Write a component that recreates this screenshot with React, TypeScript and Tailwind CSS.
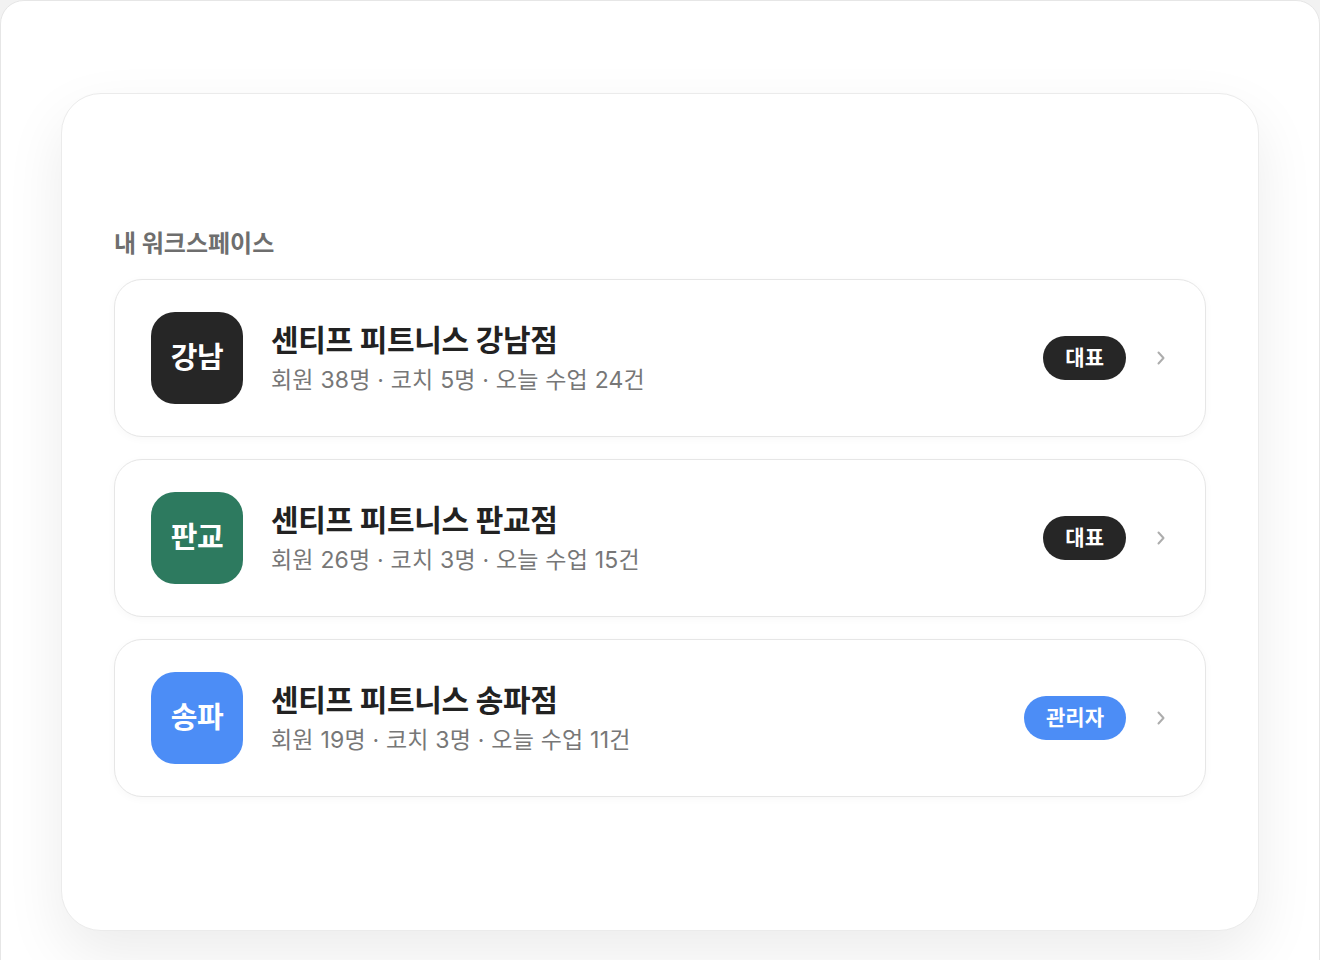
import React from "react";

type Ws = {
  short: string;
  name: string;
  members: number;
  coaches: number;
  classes: number;
  avatar: string;
  role: string;
  badge: string;
};

const items: Ws[] = [
  { short: "강남", name: "센티프 피트니스 강남점", members: 38, coaches: 5, classes: 24, avatar: "bg-[#262626]", role: "대표", badge: "bg-[#262626]" },
  { short: "판교", name: "센티프 피트니스 판교점", members: 26, coaches: 3, classes: 15, avatar: "bg-[#2d7a5f]", role: "대표", badge: "bg-[#262626]" },
  { short: "송파", name: "센티프 피트니스 송파점", members: 19, coaches: 3, classes: 11, avatar: "bg-[#4c8df6]", role: "관리자", badge: "bg-[#4c8df6]" },
];

function Chevron() {
  return (
    <svg width="10" height="16" viewBox="0 0 10 16" fill="none">
      <path d="M2.5 2.5L7.5 8L2.5 13.5" stroke="#adadad" strokeWidth="2" strokeLinecap="round" strokeLinejoin="round" />
    </svg>
  );
}

export default function App() {
  return (
    <div
      className="w-[1320px] h-[960px] overflow-hidden bg-[#f2f2f2]"
      style={{ fontFamily: 'Inter, "Noto Sans CJK KR", "Noto Sans", sans-serif' }}
    >
      <div className="w-[1320px] h-[1000px] bg-white border border-[#e6e6e6] rounded-[24px] pl-[60px] pr-[60px] pt-[92px]">
        <div className="w-[1198px] h-[838px] bg-white border border-[#ebebeb] rounded-[40px] shadow-[0_24px_60px_rgba(0,0,0,0.08)] px-[52px] pt-[134px]">
          <div className="text-[24px] leading-[32px] font-bold text-[#6e6e6e] mb-[19px]">
            내 워크스페이스
          </div>
          <div className="flex flex-col gap-[22px]">
            {items.map((it) => (
              <div
                key={it.short}
                className="h-[158px] bg-white border border-[#e6e6e6] rounded-[28px] shadow-[0_2px_8px_rgba(0,0,0,0.03)] flex items-center pl-[36px] pr-[39px]"
              >
                <div className={`w-[92px] h-[92px] rounded-[24px] ${it.avatar} flex items-center justify-center text-white text-[29px] font-bold tracking-[-0.5px]`}>
                  {it.short}
                </div>
                <div className="ml-[28px] flex flex-col flex-1">
                  <div className="text-[30px] leading-[38px] font-bold text-[#222222] tracking-[-0.3px]">
                    {it.name}
                  </div>
                  <div className="text-[23px] leading-[32px] text-[#777777] mt-[5px] tracking-[0.2px]">
                    회원 {it.members}명 · 코치 {it.coaches}명 · 오늘 수업 {it.classes}건
                  </div>
                </div>
                <div className={`h-[44px] px-[22px] rounded-full ${it.badge} text-white text-[21px] font-bold flex items-center`}>
                  {it.role}
                </div>
                <div className="ml-[30px] flex items-center">
                  <Chevron />
                </div>
              </div>
            ))}
          </div>
        </div>
      </div>
    </div>
  );
}
